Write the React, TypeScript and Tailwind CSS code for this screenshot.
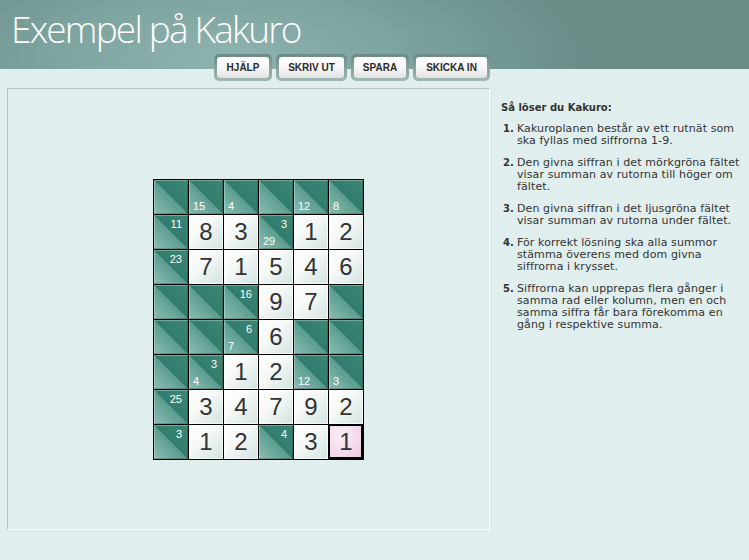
import React from 'react'

type Cell =
  | { t: 'c'; r?: number; d?: number }
  | { t: 'n'; v: number; sel?: boolean }

const c = (r?: number, d?: number): Cell => ({ t: 'c', r, d })
const n = (v: number, sel = false): Cell => ({ t: 'n', v, sel })

const grid: Cell[][] = [
  [c(), c(undefined, 15), c(undefined, 4), c(), c(undefined, 12), c(undefined, 8)],
  [c(11), n(8), n(3), c(3, 29), n(1), n(2)],
  [c(23), n(7), n(1), n(5), n(4), n(6)],
  [c(), c(), c(16), n(9), n(7), c()],
  [c(), c(), c(6, 7), n(6), c(), c()],
  [c(), c(3, 4), n(1), n(2), c(undefined, 12), c(undefined, 3)],
  [c(25), n(3), n(4), n(7), n(9), n(2)],
  [c(3), n(1), n(2), c(4), n(3), n(1, true)],
]

const steps = [
  'Kakuroplanen består av ett rutnät som ska fyllas med siffrorna 1-9.',
  'Den givna siffran i det mörkgröna fältet visar summan av rutorna till höger om fältet.',
  'Den givna siffran i det ljusgröna fältet visar summan av rutorna under fältet.',
  'För korrekt lösning ska alla summor stämma överens med dom givna siffrorna i krysset.',
  'Siffrorna kan upprepas flera gånger i samma rad eller kolumn, men en och samma siffra får bara förekomma en gång i respektive summa.',
]

const buttons = [
  { label: 'HJÄLP', w: 'w-[58px]' },
  { label: 'SKRIV UT', w: 'w-[71px]' },
  { label: 'SPARA', w: 'w-[58px]' },
  { label: 'SKICKA IN', w: 'w-[77px]' },
]

function GridCell({ cell }: { cell: Cell }) {
  if (cell.t === 'c') {
    return (
      <div className="w-[34px] h-[34px] flex flex-col justify-between px-[3px] pt-[4px] pb-[2px] bg-[linear-gradient(to_top_right,#8cbdb2_0%,#5a9d90_49.6%,#317c6d_50.4%,#3e8777_100%)] shadow-[inset_1px_1px_0_rgba(255,255,255,0.3),inset_-1px_-1px_0_rgba(0,0,0,0.18)] text-white text-[11px] leading-none font-['Liberation_Sans',sans-serif]">
        <span className="self-end pr-[3px] h-[11px]">{cell.r ?? ''}</span>
        <span className="self-start pl-[1px] h-[11px]">{cell.d ?? ''}</span>
      </div>
    )
  }
  return (
    <div
      className={
        cell.sel
          ? "w-[34px] h-[34px] flex items-center justify-center bg-[radial-gradient(circle_at_35%_30%,#fbeef7_0%,#f1d3e8_70%,#eac3df_100%)] shadow-[inset_1px_1px_0_#000,inset_-2px_-2px_0_#000] text-[24px] leading-none text-[#333] font-['Liberation_Sans',sans-serif]"
          : "w-[34px] h-[34px] flex items-center justify-center bg-[linear-gradient(135deg,#ffffff_0%,#f6f9f8_40%,#d2e3df_100%)] shadow-[inset_0_0_0_1px_rgba(255,255,255,0.7)] text-[24px] leading-none text-[#333] font-['Liberation_Sans',sans-serif]"
      }
    >
      {cell.v}
    </div>
  )
}

export default function App() {
  return (
    <div className="min-h-[560px] w-[749px] bg-[#e0eeed] overflow-hidden">
      <header className="h-[69px] bg-[radial-gradient(ellipse_360px_130px_at_30%_85%,#8fb3ae_0%,#7fa5a0_45%,#6a8d88_100%)] pl-[11px] pt-[10px]">
        <h1 className="text-white text-[37px] leading-none font-light tracking-[-1.8px] font-['Open_Sans',sans-serif]">Exempel på Kakuro</h1>
      </header>
      <div className="flex">
        <div className="ml-[7px] w-[483px] flex flex-col">
          <div className="-mt-[15px] flex justify-end gap-[4px]">
            {buttons.map(b => (
              <div key={b.label} className={`${b.w} h-[27px] rounded-[5px] p-[3px] bg-[linear-gradient(#6a8a86,#a2b8b5)]`}>
                <div className="h-full rounded-[3px] bg-[linear-gradient(#ffffff_0%,#f7f7f7_50%,#e2e2e2_100%)] flex items-center justify-center text-[10px] font-bold text-[#2a2a2a] font-['Liberation_Sans',sans-serif]">
                  {b.label}
                </div>
              </div>
            ))}
          </div>
          <div className="mt-[7px] h-[442px] border-t border-l border-t-[#b6c3c2] border-l-[#b6c3c2] border-b border-r border-b-white border-r-white pl-[145px] pt-[90px]">
            <div className="grid grid-cols-[repeat(6,34px)] gap-px bg-black p-px w-max">
              {grid.flatMap((row, ri) => row.map((cell, ci) => <GridCell key={`${ri}-${ci}`} cell={cell} />))}
            </div>
          </div>
        </div>
        <aside className="ml-[11px] w-[246px] pt-[33px] text-[#333] font-['DejaVu_Sans',sans-serif]">
          <h2 className="text-[10px] leading-[12px] font-bold">Så löser du Kakuro:</h2>
          <ol className="mt-[9px] pl-[2px] flex flex-col gap-[10px] text-[11px] leading-[12px] tracking-[0.1px]">
            {steps.map((s, i) => (
              <li key={i} className="flex">
                <span className="w-[14px] shrink-0 font-bold text-[10px] tracking-normal">{i + 1}.</span>
                <span>{s}</span>
              </li>
            ))}
          </ol>
        </aside>
      </div>
    </div>
  )
}
